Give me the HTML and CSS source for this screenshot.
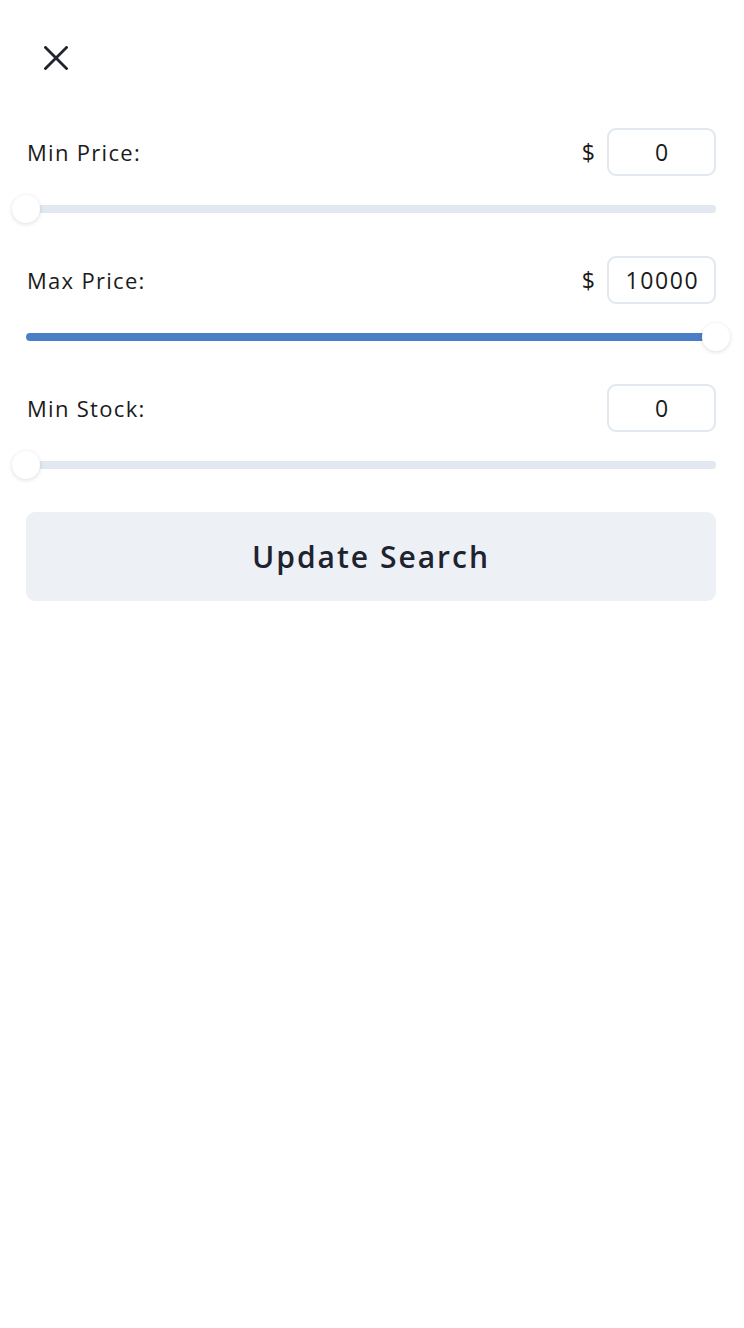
FILE: index.html
```html
<!DOCTYPE html>
<html lang="en">
<head>
<meta charset="utf-8">
<title>Filters</title>
<link rel="stylesheet" href="styles.css">
</head>
<body>
<div class="page">
  <div class="topbar">
    <button class="close" aria-label="Close">
      <svg width="24" height="24" viewBox="0 0 24 24"><path d="M1.5 1.5 L22.5 22.5 M22.5 1.5 L1.5 22.5" stroke="#1f2430" stroke-width="2.8" stroke-linecap="square" fill="none"/></svg>
    </button>
  </div>

  <div class="field">
    <div class="field-head">
      <span class="label">Min Price:</span>
      <div class="value"><span class="cur">$</span><input class="num" type="text" value="0"></div>
    </div>
    <div class="slider">
      <div class="track"></div>
      <div class="thumb thumb-start"></div>
    </div>
  </div>

  <div class="field">
    <div class="field-head">
      <span class="label">Max Price:</span>
      <div class="value"><span class="cur">$</span><input class="num" type="text" value="10000"></div>
    </div>
    <div class="slider">
      <div class="track track-filled"></div>
      <div class="thumb thumb-end"></div>
    </div>
  </div>

  <div class="field">
    <div class="field-head">
      <span class="label">Min Stock:</span>
      <div class="value"><input class="num" type="text" value="0"></div>
    </div>
    <div class="slider">
      <div class="track"></div>
      <div class="thumb thumb-start"></div>
    </div>
  </div>

  <button class="update">Update Search</button>
</div>
</body>
</html>
```

FILE: styles.css
```css
* { box-sizing: border-box; }
html, body { margin: 0; padding: 0; background: #ffffff; }
body {
  font-family: "Open Sans", "Liberation Sans", sans-serif;
  color: #1a1a1a;
}
.page {
  padding: 0 28px 0 26px;
  display: flex;
  flex-direction: column;
}
.topbar {
  height: 128px;
  display: flex;
  align-items: flex-start;
}
.close {
  margin: 46px 0 0 18px;
  padding: 0;
  border: 0;
  background: none;
  width: 24px;
  height: 24px;
  display: block;
}
.close svg { display: block; }
.field {
  display: flex;
  flex-direction: column;
  margin-bottom: 43px;
}
.field-head {
  height: 48px;
  display: flex;
  align-items: center;
  justify-content: space-between;
}
.label {
  font-size: 22px;
  padding-left: 1px;
  letter-spacing: 1.3px;
}
.value {
  display: flex;
  align-items: center;
  gap: 12px;
}
.cur { font-size: 23px; }
.num {
  width: 109px;
  height: 48px;
  border: 2px solid #e2e8f0;
  border-radius: 9px;
  font-family: inherit;
  font-size: 23px;
  letter-spacing: 1.6px;
  color: #1a1a1a;
  text-align: center;
  padding: 0 0 0 2px;
  outline: none;
  background: #fff;
}
.slider {
  position: relative;
  margin-top: 29px;
  height: 8px;
}
.track {
  height: 8px;
  border-radius: 4px;
  background: #e2e8f0;
}
.track-filled { background: #4a7fc7; }
.thumb {
  position: absolute;
  top: 50%;
  width: 28px;
  height: 28px;
  margin-top: -14px;
  border-radius: 50%;
  background: #fff;
  box-shadow: 0 1px 4px rgba(0,0,0,0.14);
}
.thumb-start { left: -14px; }
.thumb-end { right: -14px; }
.update {
  height: 89px;
  border: 0;
  border-radius: 9px;
  background: #edf0f5;
  font-family: inherit;
  font-size: 30px;
  font-weight: 600;
  letter-spacing: 2px;
  color: #1e2330;
  cursor: pointer;
}
```
